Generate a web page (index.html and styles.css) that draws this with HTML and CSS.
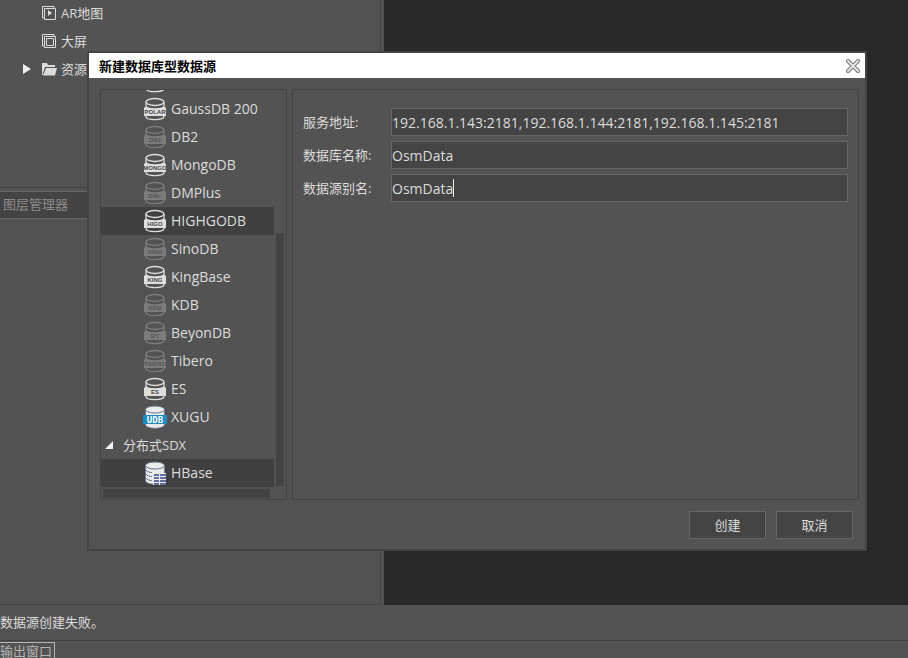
FILE: index.html
```html
<!DOCTYPE html>
<html lang="zh-CN">
<head>
<meta charset="utf-8">
<title>新建数据库型数据源</title>
<link rel="stylesheet" href="styles.css">
</head>
<body>
<svg class="defs" aria-hidden="true">
  <symbol id="db" viewBox="0 0 24 24">
    <g fill="none" stroke="currentColor" stroke-width="1.3">
      <ellipse cx="12" cy="5" rx="9" ry="3.5"/>
      <path d="M3 5v6M21 5v6M3 18v1.500c0 4.200 18 4.200 18 0V18"/>
    </g>
    <path fill="currentColor" d="M3 9c2 3 16 3 18 0v1.500h2V19H1v-8.500h2z"/>
  </symbol>
  <symbol id="db-solid" viewBox="0 0 24 24">
    <path fill="#e9e9eb" stroke="#66758c" stroke-width=".8" d="M2.500 4.500v15c0 5 19 5 19 0v-15z"/>
    <ellipse cx="12" cy="4.500" rx="9.500" ry="3.500" fill="#ececec" stroke="#66758c"/>
  </symbol>
</svg>
<main class="workspace">
  <aside class="sidebar">
    <div class="dock">
      <ul class="resources">
        <li><span class="arrow"></span><svg class="glyph" viewBox="0 0 14 14"><path d="M2.500 13.500h11v-11h-11zM12 2V.5H.5V12H2" fill="none" stroke="currentColor"/><path d="M6 4v6l4-3z" fill="currentColor"/></svg>AR地图</li>
        <li><span class="arrow"></span><svg class="glyph" viewBox="0 0 14 14"><path d="M2.500 13.500h11v-11h-11zM12 2V.5H.5V12H2M4.500 4.500h7v7h-7z" fill="none" stroke="currentColor"/></svg>大屏</li>
        <li><span class="arrow arrow-closed"></span><svg class="glyph" viewBox="0 0 14 14"><path d="M0 13V1h5l1 2h7v2H3L1 11v2zM1 13.500 4 6h11l-2 7.500z" fill="currentColor"/></svg>资源</li>
      </ul>
      <h2 class="layer-title">图层管理器</h2>
    </div>
  </aside>
  <section class="canvas"></section>
</main>
<p class="status">数据源创建失败。</p>
<footer class="tabs"><button type="button" class="tab">输出窗口</button></footer>

<div class="dialog" role="dialog" aria-labelledby="dialog-title">
  <header class="titlebar">
    <h1 id="dialog-title">新建数据库型数据源</h1>
    <button type="button" class="close" aria-label="关闭"><svg viewBox="0 0 16 16"><path d="m3 3 10 10M13 3 3 13" stroke="#777" stroke-width="4" stroke-linecap="round"/><path d="m3 3 10 10M13 3 3 13" stroke="#e4e4e4" stroke-width="2" stroke-linecap="round"/></svg></button>
  </header>
  <div class="panels">
    <div class="tree">
      <ul class="engines">
        <li><svg class="icon"><use href="#db"/></svg></li>
        <li><svg class="icon"><use href="#db"/><text x="12" y="17">POLAR</text></svg>GaussDB 200</li>
        <li><svg class="icon off"><use href="#db"/><text x="12" y="17">DB2</text></svg>DB2</li>
        <li><svg class="icon"><use href="#db"/><text x="12" y="17">MONGO</text></svg>MongoDB</li>
        <li><svg class="icon off"><use href="#db"/><text x="12" y="17">DM+</text></svg>DMPlus</li>
        <li class="selected"><svg class="icon"><use href="#db"/><text x="12" y="17">HIGO</text></svg>HIGHGODB</li>
        <li><svg class="icon off"><use href="#db"/><text x="12" y="17">SINO</text></svg>SinoDB</li>
        <li><svg class="icon"><use href="#db"/><text x="12" y="17">KING</text></svg>KingBase</li>
        <li><svg class="icon off"><use href="#db"/><text x="12" y="17">KDB</text></svg>KDB</li>
        <li><svg class="icon off"><use href="#db"/><text x="12" y="17">BY</text></svg>BeyonDB</li>
        <li><svg class="icon off"><use href="#db"/><text x="12" y="17">TIBERO</text></svg>Tibero</li>
        <li><svg class="icon"><use href="#db"/><text x="12" y="17">ES</text></svg>ES</li>
        <li><svg class="icon"><use href="#db-solid"/><path d="M0 10h24v9H0z" fill="#1e8bc3"/><text class="udb" x="12" y="18">UDB</text></svg>XUGU</li>
        <li class="group"><span class="arrow arrow-open"></span>分布式SDX</li>
        <li class="selected"><svg class="icon"><use href="#db-solid"/><path d="M3 9c1 2 4 2.500 6 2.500M3 13c1 2 4 2.500 6 2.500M3 17c1 2 4 2.500 6 2.500" fill="none" stroke="#66758c"/><path d="M10 12h13v12H10z" fill="#e9e9eb"/><path d="M11 14h12M11 17h12M11 20h12M11 23h12" stroke="#626fa5" stroke-width="2"/><path d="M16.500 13v11" stroke="#e9e9eb"/></svg>HBase</li>
      </ul>
      <div class="vscroll"><span></span></div>
      <div class="hscroll"></div>
    </div>
    <form class="form">
      <label for="host">服务地址:</label>
      <div class="field"><input id="host" type="text" value="192.168.1.143:2181,192.168.1.144:2181,192.168.1.145:2181"></div>
      <label for="database">数据库名称:</label>
      <div class="field"><input id="database" type="text" value="OsmData"></div>
      <label for="alias">数据源别名:</label>
      <div class="field"><input id="alias" type="text" value="OsmData"><span class="caret" aria-hidden="true">OsmData</span></div>
    </form>
  </div>
  <div class="actions">
    <button type="button">创建</button>
    <button type="button">取消</button>
  </div>
</div>
</body>
</html>
```
FILE: styles.css
```css
:root {
  --bg: #535353;
  --line: #434343;
  --light: #676767;
  --text: #dcdcdc;
}

* { box-sizing: border-box; }

body {
  margin: 0;
  height: 100vh;
  display: flex;
  flex-direction: column;
  overflow: hidden;
  background: var(--bg);
  color: var(--text);
  font: 13px/20px "Open Sans", "Noto Sans CJK SC", sans-serif;
}

ul { margin: 0; padding: 0; list-style: none; }
h1, h2, p { margin: 0; font-size: 13px; }
button, input { font: inherit; color: inherit; }
.defs { display: none; }

.workspace { flex: 1; display: flex; min-height: 0; }
.sidebar { flex: 0 0 384px; padding-right: 3px; }
.dock {
  height: 100%;
  border-right: 1px solid var(--line);
  border-bottom: 1px solid var(--line);
}
.resources {
  height: 188px;
  margin-bottom: 3px;
  overflow: hidden;
  border-bottom: 1px solid var(--line);
}
.resources li {
  display: flex;
  align-items: center;
  height: 28px;
  padding-left: 22px;
}
.resources li:first-child { margin-top: -1px; }
.glyph { width: 14px; height: 14px; margin-right: 5px; overflow: visible; }
.arrow { width: 20px; }
.arrow::before { content: ""; display: block; width: 0; height: 0; }
.arrow-closed::before {
  margin-left: 1px;
  border: 5px solid transparent;
  border-left: 8px solid #f0f0f0;
  border-right: 0;
}
.arrow-open::before {
  border-left: 8px solid transparent;
  border-bottom: 8px solid #f0f0f0;
}
.layer-title {
  height: 28px;
  padding-left: 3px;
  border: solid var(--light);
  border-width: 1px 0;
  background: var(--line);
  color: #8c8c8c;
  font-weight: 400;
  line-height: 25px;
}
.canvas { flex: 1; background: #282828; }

.status {
  height: 36px;
  border-bottom: 1px solid var(--line);
  line-height: 34px;
}
.tabs { height: 17px; padding-top: 1px; overflow: hidden; }
.tab {
  display: block;
  padding: 0 2px 0 0;
  border: solid #b4b4b4;
  border-width: 1px 1px 0 0;
  background: none;
  color: #b4b4b4;
  line-height: 16px;
}

.dialog {
  position: absolute;
  top: 51px;
  left: 87px;
  right: 41px;
  border: 2px solid var(--line);
  background: var(--bg);
}
.titlebar {
  display: flex;
  align-items: center;
  justify-content: space-between;
  height: 25px;
  padding: 0 4px 0 10px;
  background: #fff;
  color: #000;
}
.close { width: 16px; height: 16px; padding: 0; border: 0; background: none; }
.close svg { display: block; }

.panels { display: flex; gap: 5px; padding: 11px 6px 11px 11px; }
.tree {
  flex: 0 0 187px;
  display: grid;
  grid-template-columns: 1fr 12px;
  grid-template-rows: 397px 12px;
  border: 1px solid var(--line);
}
.engines {
  display: flex;
  flex-direction: column;
  justify-content: flex-end;
  overflow: hidden;
}
.engines li {
  flex: 0 0 28px;
  display: flex;
  align-items: center;
  gap: 4px;
  padding-left: 42px;
}
.engines .selected { background: #404040; }
.engines .group { gap: 0; padding-left: 4px; }
.group .arrow { width: 18px; }
.engines li, .field { font-size: 14px; }
.engines .group { font-size: 13px; }
.icon { width: 24px; height: 24px; color: #dedede; }
.icon text {
  fill: #484848;
  font: bold 6px "Liberation Sans", sans-serif;
  text-anchor: middle;
}
.icon .udb { fill: #fff; font: bold 9px "DejaVu Sans Mono", monospace; }
.off { color: #7c7c7c; }
.off text { fill: #555; }
.vscroll { padding: 143px 2px 1px; }
.vscroll span { display: block; height: 100%; background: var(--line); }
.hscroll { margin: 2px 4px 1px 2px; background: var(--line); }

.form {
  flex: 1;
  display: grid;
  grid-template-columns: 88px 1fr;
  grid-auto-rows: 28px;
  gap: 5px 0;
  align-items: center;
  padding: 18px 10px;
  border: 1px solid var(--line);
}
.field { position: relative; }
.field input {
  display: block;
  width: 100%;
  height: 28px;
  padding: 0;
  border: 1px solid var(--light);
  background: #444;
  outline: none;
}
.caret {
  position: absolute;
  top: 5px;
  left: 1px;
  height: 18px;
  border-right: 1px solid #f0f0f0;
  color: transparent;
  pointer-events: none;
}

.actions {
  display: flex;
  justify-content: flex-end;
  gap: 10px;
  padding: 0 12px 10px;
}
.actions button {
  width: 77px;
  height: 28px;
  border: 1px solid var(--light);
  background: #444;
}
```
